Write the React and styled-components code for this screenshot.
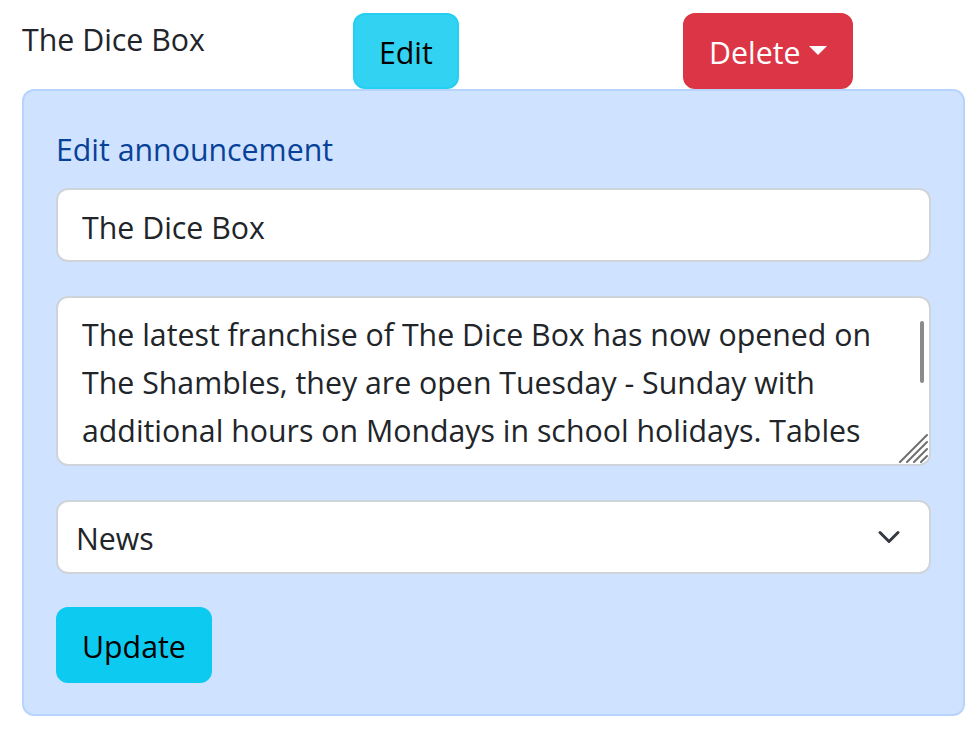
import React from "react";
import styled, { createGlobalStyle } from "styled-components";

const GlobalStyle = createGlobalStyle`
  *, *::before, *::after { box-sizing: border-box; }
  body {
    margin: 0;
    background: #ffffff;
    font-family: "Open Sans", "Noto Sans", sans-serif;
    font-size: 30.3px;
    line-height: 48px;
    color: #212529;
  }
`;

const Page = styled.div`
  width: 943px;
  margin-left: 22px;
  padding-top: 13px;
`;

const Header = styled.div`
  display: grid;
  grid-template-columns: 331px 330px auto;
  align-items: start;
`;

const Title = styled.div`
  padding-top: 3px;
  white-space: nowrap;
`;

const variants = {
  infoHover: { bg: "#31d2f2", border: "#25cff2", color: "#000000" },
  info: { bg: "#0dcaf0", border: "#0dcaf0", color: "#000000" },
  danger: { bg: "#dc3545", border: "#dc3545", color: "#ffffff" },
};

const Button = styled.button`
  justify-self: start;
  display: inline-block;
  margin: 0;
  padding: 14px 24px 10px;
  border: 2px solid ${(p) => variants[p.$variant].border};
  border-radius: 12px;
  background: ${(p) => variants[p.$variant].bg};
  color: ${(p) => variants[p.$variant].color};
  font: inherit;
  line-height: 48px;
  white-space: nowrap;
  cursor: pointer;
`;

const Caret = styled.span`
  display: inline-block;
  width: 0;
  height: 0;
  margin-left: 9px;
  vertical-align: 9px;
  border-top: 9px solid currentColor;
  border-left: 9px solid transparent;
  border-right: 9px solid transparent;
`;

const Card = styled.form`
  background: #cfe2ff;
  border: 2px solid #b6d4fe;
  border-radius: 12px;
  padding: 35px 32px 31px;
`;

const Heading = styled.h2`
  margin: 0 0 14px;
  font-size: inherit;
  font-weight: 400;
  line-height: 48px;
  color: #084298;
`;

const fieldBase = `
  display: block;
  width: 100%;
  margin: 0;
  background: #ffffff;
  border: 2px solid #ced4da;
  border-radius: 12px;
  font: inherit;
  line-height: 48px;
  color: #212529;
  outline: none;
`;

const TextInput = styled.input`
  ${fieldBase}
  height: 74px;
  padding: 13px 24px 9px;
  margin-bottom: 34px;
`;

const AreaWrap = styled.div`
  position: relative;
  margin-bottom: 34px;
`;

const TextArea = styled.textarea`
  ${fieldBase}
  height: 170px;
  padding: 13px 24px 9px;
  overflow: hidden;
  resize: none;
`;

const ScrollThumb = styled.div`
  position: absolute;
  top: 25px;
  right: 7px;
  width: 4px;
  height: 62px;
  border-radius: 2px;
  background: #8a8a8a;
`;

const Grip = styled.svg`
  position: absolute;
  right: 3px;
  bottom: 3px;
  width: 30px;
  height: 30px;
  pointer-events: none;
`;

const SelectWrap = styled.div`
  position: relative;
  margin-bottom: 33px;
`;

const Select = styled.select`
  ${fieldBase}
  appearance: none;
  -webkit-appearance: none;
  height: 74px;
  padding: 13px 72px 9px 18px;
`;

const Chevron = styled.svg`
  position: absolute;
  right: 30px;
  top: 50%;
  width: 24px;
  height: 24px;
  transform: translateY(-50%);
  pointer-events: none;
`;

const text =
  "The latest franchise of The Dice Box has now opened on The Shambles, they are open Tuesday - Sunday with additional hours on Mondays in school holidays. Tables";

export default function App() {
  return (
    <Page>
      <GlobalStyle />
      <Header>
        <Title>The Dice Box</Title>
        <Button type="button" $variant="infoHover">Edit</Button>
        <Button type="button" $variant="danger">
          Delete<Caret />
        </Button>
      </Header>
      <Card onSubmit={(e) => e.preventDefault()}>
        <Heading>Edit announcement</Heading>
        <TextInput type="text" defaultValue="The Dice Box" />
        <AreaWrap>
          <TextArea rows={3} defaultValue={text} />
          <ScrollThumb />
          <Grip viewBox="0 0 30 30">
            <g stroke="#6f6f6f" strokeWidth="2" strokeLinecap="round">
              <line x1="29" y1="2" x2="2" y2="29" />
              <line x1="29" y1="9" x2="9" y2="29" />
              <line x1="29" y1="16" x2="16" y2="29" />
              <line x1="29" y1="23" x2="23" y2="29" />
            </g>
          </Grip>
        </AreaWrap>
        <SelectWrap>
          <Select defaultValue="News">
            <option>News</option>
            <option>Event</option>
            <option>Offer</option>
          </Select>
          <Chevron viewBox="0 0 16 16">
            <path
              d="m2 5 6 6 6-6"
              fill="none"
              stroke="#343a40"
              strokeWidth="2"
              strokeLinecap="round"
              strokeLinejoin="round"
            />
          </Chevron>
        </SelectWrap>
        <Button type="submit" $variant="info">Update</Button>
      </Card>
    </Page>
  );
}
